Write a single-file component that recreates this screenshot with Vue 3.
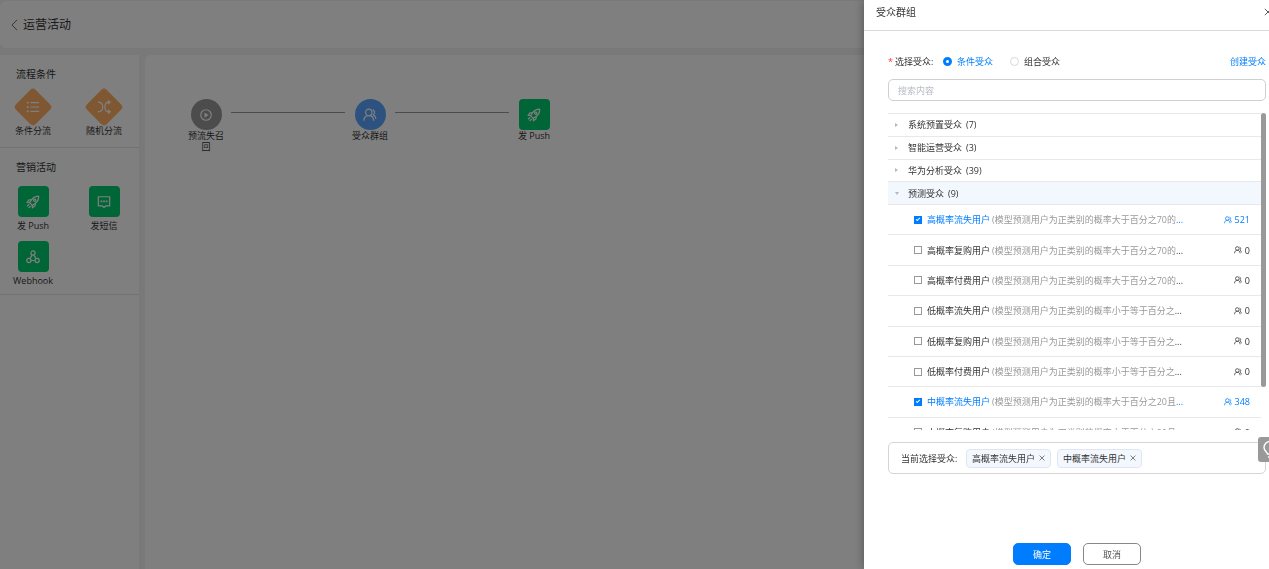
<script setup>
import { ref, computed } from 'vue'

const groups = [
  { name: '系统预置受众', count: 7 },
  { name: '智能运营受众', count: 3 },
  { name: '华为分析受众', count: 39 },
  { name: '预测受众', count: 9, open: true },
]
const high = '(模型预测用户为正类别的概率大于百分之70的'
const low = '(模型预测用户为正类别的概率小于等于百分之'
const mid = '(模型预测用户为正类别的概率大于百分之20且'
const audiences = ref([
  { name: '高概率流失用户', desc: high, total: 521, checked: true },
  { name: '高概率复购用户', desc: high, total: 0, checked: false },
  { name: '高概率付费用户', desc: high, total: 0, checked: false },
  { name: '低概率流失用户', desc: low, total: 0, checked: false },
  { name: '低概率复购用户', desc: low, total: 0, checked: false },
  { name: '低概率付费用户', desc: low, total: 0, checked: false },
  { name: '中概率流失用户', desc: mid, total: 348, checked: true },
  { name: '中概率复购用户', desc: mid, total: 0, checked: false },
])
const selected = computed(() => audiences.value.filter((a) => a.checked))
const kind = ref('condition')
const keyword = ref('')
</script>

<template>
  <svg class="defs" aria-hidden="true">
    <symbol id="i-rocket" viewBox="0 0 16 16">
      <path d="M14.6 1.4C11 1.5 8.3 3 6.4 5.2L3.4 5.6 1.4 8.4l3 .4M14.600 1.400c-.1 3.600-1.600 6.300-4 8.200l-.4 3-2.800 2-.4-3" />
      <path d="M6.400 5.200L4.200 8.800l3 3 3.400-2.200" />
      <circle cx="10" cy="6" r="1.300" />
      <path d="M3.600 10.600l-2.400 2.200M5.400 12.400l-2.400 2.400" />
    </symbol>
    <symbol id="i-users" viewBox="0 0 16 16">
      <circle cx="6.600" cy="5" r="3.600" />
      <path d="M1 14.600c0-3.600 2.200-6 5.600-6s5.600 2.400 5.600 6M11.200 2.200c2.600.8 2.800 4.200.6 5.600 1.800.8 2.800 2.400 3 4.800" />
    </symbol>
  </svg>

  <div class="page">
    <header class="top">
      <button class="back" aria-label="返回">
        <svg viewBox="0 0 8 14"><path d="M7 1L1 7l6 6" /></svg>
      </button>
      <h1>运营活动</h1>
    </header>
    <div class="body">
      <aside class="side">
        <section class="conditions">
          <h2>流程条件</h2>
          <div class="tools">
            <div class="tool">
              <span class="diamond"><svg viewBox="0 0 16 16"><path d="M5 3h10M5 8h10M5 13h10" /><path class="dots" d="M1 3h2M1 8h2M1 13h2" /></svg></span>
              <span>条件分流</span>
            </div>
            <div class="tool">
              <span class="diamond"><svg viewBox="0 0 16 16"><path d="M1 2.500c3.500 0 5.500 2 5.500 5.500s-2 5.500-5.500 5.500M15 2.500h-1.500c-3 0-4.500 2-4.500 5.500s1.500 5.500 4.500 5.500H15M12.500.5l2.500 2-2.500 2M12.500 11.500l2.500 2-2.500 2" /></svg></span>
              <span>随机分流</span>
            </div>
          </div>
        </section>
        <section class="marketing">
          <h2>营销活动</h2>
          <div class="tools">
            <div class="tool">
              <span class="tile"><svg><use href="#i-rocket" /></svg></span>
              <span>发 Push</span>
            </div>
            <div class="tool">
              <span class="tile"><svg viewBox="0 0 16 16"><path d="M1.500 2h13v10.500h-4.500l-2 1.800-2-1.800h-4.500z" /><path class="dots" d="M4 7.300h2M7 7.300h2M10 7.300h2" /></svg></span>
              <span>发短信</span>
            </div>
            <div class="tool">
              <span class="tile"><svg viewBox="0 0 16 16"><circle cx="8" cy="3.500" r="2.400" /><circle cx="3.300" cy="12" r="2.400" /><circle cx="12.700" cy="12" r="2.400" /><path d="M7 5.800l-2.600 4M9 5.800l2.600 4M5.800 12h4.400" /></svg></span>
              <span>Webhook</span>
            </div>
          </div>
        </section>
      </aside>
      <main class="canvas">
        <div class="node">
          <span class="tile round gray"><svg viewBox="0 0 16 16"><circle cx="8" cy="8" r="6" /><path class="fill" d="M6.300 5l4.700 3-4.700 3z" /></svg></span>
          <span>预流失召回</span>
        </div>
        <i class="link"></i>
        <div class="node">
          <span class="tile round blue"><svg><use href="#i-users" /></svg></span>
          <span>受众群组</span>
        </div>
        <i class="link"></i>
        <div class="node">
          <span class="tile"><svg><use href="#i-rocket" /></svg></span>
          <span>发 Push</span>
        </div>
      </main>
    </div>
  </div>

  <div class="mask"></div>

  <div class="drawer" role="dialog" aria-labelledby="drawer-title">
    <div class="drawer-head">
      <h2 id="drawer-title">受众群组</h2>
      <button class="close" aria-label="关闭">
        <svg viewBox="0 0 10 10"><path d="M1 1l8 8M9 1l-8 8" /></svg>
      </button>
    </div>
    <div class="drawer-body">
      <div class="kinds" role="radiogroup" aria-labelledby="kind-label">
        <span id="kind-label" class="kind-label"><b>*</b>选择受众:</span>
        <label :class="{ on: kind === 'condition' }"><input v-model="kind" type="radio" name="kind" value="condition" />条件受众</label>
        <label :class="{ on: kind === 'group' }"><input v-model="kind" type="radio" name="kind" value="group" />组合受众</label>
        <a href="#">创建受众</a>
      </div>
      <input v-model="keyword" class="search" type="text" placeholder="搜索内容" aria-label="搜索内容" />
      <div class="list">
        <div class="groups">
          <button v-for="g in groups" :key="g.name" class="group" :class="{ open: g.open }" :aria-expanded="!!g.open">
            <i></i>{{ g.name }}<span>({{ g.count }})</span>
          </button>
        </div>
        <div class="items">
          <label v-for="a in audiences" :key="a.name" class="item" :class="{ on: a.checked }">
            <input v-model="a.checked" type="checkbox" />
            <span class="name">{{ a.name }}</span>
            <span class="desc">{{ a.desc }}</span><span>...</span>
            <span class="total"><svg><use href="#i-users" /></svg>{{ a.total }}</span>
          </label>
        </div>
        <div class="thumb"></div>
      </div>
      <div class="chosen">
        <span class="chosen-label">当前选择受众:</span>
        <span v-for="a in selected" :key="a.name" class="tag">
          {{ a.name }}
          <button :aria-label="'移除' + a.name" @click="a.checked = false">
            <svg viewBox="0 0 10 10"><path d="M1 1l8 8M9 1l-8 8" /></svg>
          </button>
        </span>
      </div>
    </div>
    <div class="actions">
      <button class="primary">确定</button>
      <button>取消</button>
    </div>
  </div>

  <button class="help" aria-label="帮助">
    <svg viewBox="2 0 16 18"><path d="M6.500 13c0-2-3.500-3-3.500-6.500a6 6 0 0 1 12 0c0 3.500-3.500 4.500-3.500 6.500zM7 16h4" /></svg>
  </button>
</template>

<style>
html,
body {
  height: 100%;
  overflow: hidden;
}
#app {
  height: 100%;
}
</style>

<style scoped>
.page,
.drawer {
  font: 9px/11px "Open Sans", "Noto Sans CJK SC", sans-serif;
  color: #333;
}
button,
input {
  font: inherit;
  color: inherit;
  margin: 0;
  padding: 0;
  border: 0;
  background: none;
}
h1,
h2 {
  margin: 0;
  font-weight: 400;
}
svg {
  display: block;
  fill: none;
  stroke: currentColor;
  stroke-width: 1;
}
.defs {
  position: absolute;
  width: 0;
  height: 0;
}
.page {
  height: 100%;
  display: flex;
  flex-direction: column;
  gap: 7px;
  padding-top: 1px;
  box-sizing: border-box;
  background: #f3f3f3;
}
.top {
  flex: 0 0 47px;
  display: flex;
  align-items: center;
  gap: 5px;
  padding-left: 11px;
  background: #fff;
  border-radius: 6px;
}
.top h1 {
  font-size: 12px;
  line-height: 16px;
}
.back svg {
  width: 7px;
  height: 12px;
  color: #555;
}
.body {
  flex: 1;
  display: flex;
  gap: 6px;
}
.side {
  flex: 0 0 139px;
  background: #fff;
}
.side section {
  border-bottom: 1px solid #e4e4e4;
}
.side h2 {
  padding-left: 16px;
  font-size: 10px;
  line-height: 14px;
}
.conditions {
  padding: 12px 0 11px;
}
.marketing {
  padding: 12px 0 8px;
}
.tools {
  display: grid;
  grid-template-columns: 66px 66px;
  column-gap: 5px;
  row-gap: 10px;
  margin-top: 12px;
}
.conditions .tools {
  margin-top: 8px;
}
.tool {
  display: flex;
  flex-direction: column;
  align-items: center;
  gap: 3px;
  white-space: nowrap;
}
.conditions .tool {
  gap: 0;
}
.diamond {
  position: relative;
  width: 36px;
  height: 36px;
  display: grid;
  place-items: center;
  color: #fff;
}
.diamond::before {
  content: "";
  position: absolute;
  inset: 4px;
  border-radius: 4px;
  background: #ffb066;
  transform: rotate(45deg);
}
.diamond svg,
.tile svg {
  position: relative;
  width: 14px;
  height: 14px;
  stroke-width: 1.4;
}
.diamond .dots,
.tile .dots {
  stroke-width: 2;
}
.fill {
  fill: currentColor;
  stroke: none;
}
.tile {
  width: 31px;
  height: 31px;
  display: grid;
  place-items: center;
  border-radius: 4px;
  background: #00cc6e;
  color: #fff;
}
.round {
  border-radius: 50%;
}
.gray {
  background: #999;
}
.blue {
  background: #5aa5ff;
}
.canvas {
  flex: 1;
  display: flex;
  align-items: flex-start;
  padding: 44px 0 0 42px;
  background: #fff;
  border-radius: 6px 0 0 0;
}
.node {
  flex: 0 0 38px;
  display: flex;
  flex-direction: column;
  align-items: center;
  text-align: center;
}
.link {
  flex: 0 0 114px;
  height: 1px;
  margin: 13px 6px 0;
  background: #999;
}
.mask {
  position: fixed;
  inset: 0;
  background: rgba(0, 0, 0, 0.5);
}
.drawer {
  position: fixed;
  top: 0;
  right: 0;
  bottom: 0;
  width: 405px;
  display: flex;
  flex-direction: column;
  background: #fff;
  box-shadow: 0 0 10px rgba(0, 0, 0, 0.35);
  overflow: hidden;
}
.drawer-head {
  flex: 0 0 31px;
  display: flex;
  justify-content: space-between;
  padding: 5px 0 0 12px;
  box-sizing: border-box;
  border-bottom: 1px solid #d9d9d9;
}
.drawer-head h2 {
  font-size: 10px;
  line-height: 14px;
}
.close {
  align-self: flex-start;
  margin: 3px -3px 0 0;
}
.close svg {
  width: 8px;
  height: 8px;
}
.drawer-body {
  flex: 1;
  padding: 23px 3px 0 24px;
}
.kinds {
  display: flex;
  align-items: center;
  height: 15px;
}
.kind-label {
  width: 55px;
}
.kind-label b {
  margin-right: 2px;
  font-weight: 400;
  color: #f33;
}
.kinds label {
  display: flex;
  align-items: center;
  gap: 5px;
  margin-right: 17px;
}
.kinds input {
  appearance: none;
  width: 9px;
  height: 9px;
  box-sizing: border-box;
  border: 1px solid #d5d8de;
  border-radius: 50%;
}
.kinds input:checked {
  border: 3px solid #007dff;
}
.kinds .on,
.item.on,
.kinds a {
  color: #007dff;
}
.kinds a {
  margin-left: auto;
  text-decoration: none;
}
.search {
  display: block;
  width: 100%;
  height: 22px;
  margin-top: 10px;
  padding: 0 9px;
  box-sizing: border-box;
  border: 1px solid #d0d0d0;
  border-radius: 5px;
}
.search::placeholder {
  color: #b8bcc6;
}
.list {
  position: relative;
  height: 317px;
  margin-top: 12px;
  padding-right: 5px;
  overflow: hidden;
}
.groups {
  height: 91px;
  display: grid;
  grid-auto-rows: 1fr;
  border-top: 1px solid #e8e8e8;
}
.group {
  display: flex;
  align-items: center;
  padding-left: 7px;
  border-bottom: 1px solid #e8e8e8;
}
.group span {
  margin-left: 4px;
}
.group i {
  width: 3px;
  margin-right: 10px;
  border: 2px solid transparent;
  border-left: 3px solid #b4b8c0;
  border-right: 0;
  box-sizing: border-box;
}
.group.open {
  background: #f3f8ff;
}
.group.open i {
  width: 4px;
  margin-right: 9px;
  border: 2px solid transparent;
  border-top: 3px solid #b4b8c0;
  border-bottom: 0;
}
.items {
  height: 243px;
  display: grid;
  grid-auto-rows: 1fr;
}
.item {
  display: flex;
  align-items: center;
  padding: 0 11px 0 26px;
  border-bottom: 1px solid #e8e8e8;
  white-space: nowrap;
}
.item input {
  appearance: none;
  display: grid;
  place-items: center;
  width: 8px;
  height: 8px;
  box-sizing: border-box;
  border: 1px solid #999;
}
.item input:checked {
  border-color: #007dff;
  background: #007dff;
}
.item input:checked::after {
  content: "";
  width: 4px;
  height: 2px;
  box-sizing: border-box;
  margin-bottom: 1px;
  border: solid #fff;
  border-width: 0 0 1px 1px;
  transform: rotate(-45deg);
}
.name {
  margin: 0 2px 0 5px;
}
.desc {
  color: #999;
}
.total {
  display: flex;
  align-items: center;
  gap: 3px;
  margin-left: auto;
}
.total svg {
  width: 8px;
  height: 8px;
  stroke-width: 1.500;
}
.thumb {
  position: absolute;
  top: 0;
  right: 0;
  width: 5px;
  height: 274px;
  border-radius: 3px;
  background: #999;
}
.chosen {
  display: flex;
  align-items: center;
  height: 32px;
  margin-top: 12px;
  padding-left: 12px;
  box-sizing: border-box;
  border: 1px solid #d5d5d5;
  border-radius: 5px;
}
.chosen-label {
  width: 65px;
}
.tag {
  display: flex;
  align-items: center;
  gap: 4px;
  height: 19px;
  margin-right: 6px;
  padding: 0 5px;
  box-sizing: border-box;
  border: 1px solid #e0e6f0;
  border-radius: 4px;
  background: #f3f8ff;
}
.tag svg {
  width: 6px;
  height: 6px;
  stroke-width: 1.4;
  color: #666;
}
.actions {
  display: flex;
  justify-content: center;
  gap: 12px;
  padding: 0 3px 4px 24px;
}
.actions button {
  width: 58px;
  height: 22px;
  box-sizing: border-box;
  border: 1px solid #888;
  border-radius: 5px;
  color: #555;
}
.actions .primary {
  border-color: #007dff;
  background: #007dff;
  color: #fff;
}
.help {
  position: fixed;
  top: 437px;
  right: 0;
  width: 11px;
  height: 25px;
  padding-left: 5px;
  overflow: hidden;
  border-radius: 3px 0 0 3px;
  background: #999;
  color: #fff;
}
.help svg {
  width: 16px;
  height: 18px;
  stroke-width: 1.4;
}
</style>
